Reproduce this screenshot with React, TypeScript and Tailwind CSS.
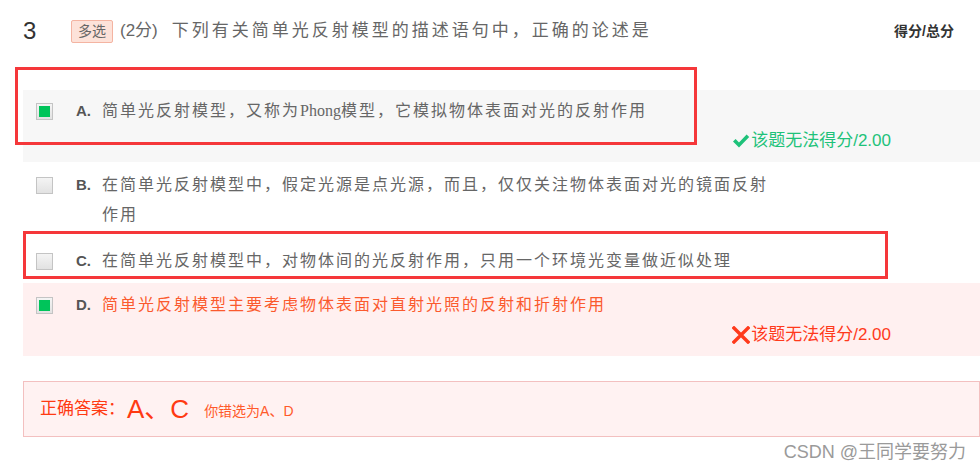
import React from "react";

const sans = "font-['Liberation_Sans','Noto_Sans_CJK_SC',sans-serif]";
const serif = "font-['Liberation_Serif','Noto_Sans_CJK_SC',serif]";

function Box({ checked }: { checked: boolean }) {
  return (
    <span className="flex h-[17px] w-[17px] items-center justify-center border border-[#c4c4c4] bg-gradient-to-b from-[#f4f4f4] to-[#e2e2e2]">
      {checked && <span className="h-[11px] w-[11px] bg-[#00c45a]" />}
    </span>
  );
}

function Check() {
  return (
    <svg width="18" height="16" viewBox="0 0 18 16" className="mr-[1px]">
      <path d="M1 8.5 L3.6 6 L7 9.4 L14.6 1.6 L17.2 4.1 L7 14.4 Z" fill="#1ec27a" />
    </svg>
  );
}

function Cross() {
  return (
    <svg width="18" height="18" viewBox="0 0 18 18" className="mr-[1px]">
      <path d="M2 2 L16 16 M16 2 L2 16" stroke="#ff3a1c" strokeWidth="3.4" strokeLinecap="square" />
    </svg>
  );
}

interface Opt {
  key: string;
  text: React.ReactNode;
  checked: boolean;
  tone: "grey" | "white" | "pink";
  score?: "ok" | "bad";
  pt: string;
  pb: string;
}

const options: Opt[] = [
  {
    key: "A",
    text: (
      <>
        简单光反射模型，又称为<span className="tracking-normal">Phong</span>模型，它模拟物体表面对光的反射作用
      </>
    ),
    checked: true,
    tone: "grey",
    score: "ok",
    pt: "pt-[6px]",
    pb: "pb-[6px]",
  },
  { key: "B", text: "在简单光反射模型中，假定光源是点光源，而且，仅仅关注物体表面对光的镜面反射作用", checked: false, tone: "white", pt: "pt-[8px]", pb: "pb-[8px]" },
  { key: "C", text: "在简单光反射模型中，对物体间的光反射作用，只用一个环境光变量做近似处理", checked: false, tone: "white", pt: "pt-[8px]", pb: "pb-[7px]" },
  { key: "D", text: "简单光反射模型主要考虑物体表面对直射光照的反射和折射作用", checked: true, tone: "pink", score: "bad", pt: "pt-[7px]", pb: "pb-[6px]" },
];

function OptionRow({ o }: { o: Opt }) {
  const bg = o.tone === "grey" ? "bg-[#f7f7f7]" : o.tone === "pink" ? "bg-[#fff0f0]" : "bg-white";
  return (
    <div className={`${bg} ${o.pt} ${o.pb}`}>
      <div className="flex">
        <div className="flex h-[30px] w-[53px] items-center pl-[13px]">
          <Box checked={o.checked} />
        </div>
        <span className={`${sans} h-[30px] w-[26px] text-[15px] font-bold leading-[30px] text-[#555]`}>{o.key}.</span>
        <span
          className={`${serif} max-w-[680px] text-[16px] leading-[30px] tracking-[2px] ${
            o.tone === "pink" ? "text-[#fb5a2e]" : "text-[#666]"
          }`}
        >
          {o.text}
        </span>
      </div>
      {o.score && (
        <div
          className={`${sans} flex h-[30px] items-center justify-end pr-[89px] text-[17px] ${
            o.score === "ok" ? "text-[#1ec27a]" : "text-[#ff3a1c]"
          }`}
        >
          {o.score === "ok" ? <Check /> : <Cross />}
          <span>该题无法得分/2.00</span>
        </div>
      )}
    </div>
  );
}

export default function App() {
  return (
    <div className="relative h-[471px] w-[980px] overflow-hidden bg-white">
      <div className="pl-[23px]">
        {/* header */}
        <div className="flex h-[62px] items-center">
          <span className={`${sans} w-[48px] text-[24px] text-[#333]`}>3</span>
          <span className={`${sans} flex h-[23px] items-center rounded-[2px] border border-[#f4b4a2] bg-[#fde2d9] px-[6px] text-[14px] text-[#666]`}>
            多选
          </span>
          <span className={`${sans} ml-[7px] text-[17px] text-[#666]`}>(2分)</span>
          <span className={`${serif} ml-[14px] text-[17px] tracking-[3px] text-[#666]`}>
            下列有关简单光反射模型的描述语句中，正确的论述是
          </span>
          <span className={`${sans} ml-auto pr-[26px] pt-[1px] text-[14px] font-bold text-[#333]`}>得分/总分</span>
        </div>

        {/* options */}
        <div className="mt-[28px]">
          {options.map((o) => (
            <OptionRow key={o.key} o={o} />
          ))}
        </div>

        {/* answer */}
        <div className={`${sans} mt-[25px] flex h-[56px] items-center border border-[#f3c0c0] bg-[#fff2f2] pl-[16px] text-[#ff3a12]`}>
          <span className="text-[17px]">正确答案：</span>
          <span className="ml-[2px] text-[26px]">A、C</span>
          <span className="ml-[15px] pt-[4px] text-[14px] text-[#ff5a2a]">你错选为A、D</span>
        </div>
      </div>

      {/* annotation boxes drawn over the screenshot */}
      <div className="absolute left-[15px] top-[67px] h-[78px] w-[682px] border-[3px] border-[#f5373a]" />
      <div className="absolute left-[23px] top-[231px] h-[48px] w-[865px] border-[3px] border-[#f5373a]" />

      {/* watermark */}
      <div className={`${sans} absolute right-[14px] top-[439px] text-[18px] text-[#9a9a9a]`}>CSDN @王同学要努力</div>
    </div>
  );
}
